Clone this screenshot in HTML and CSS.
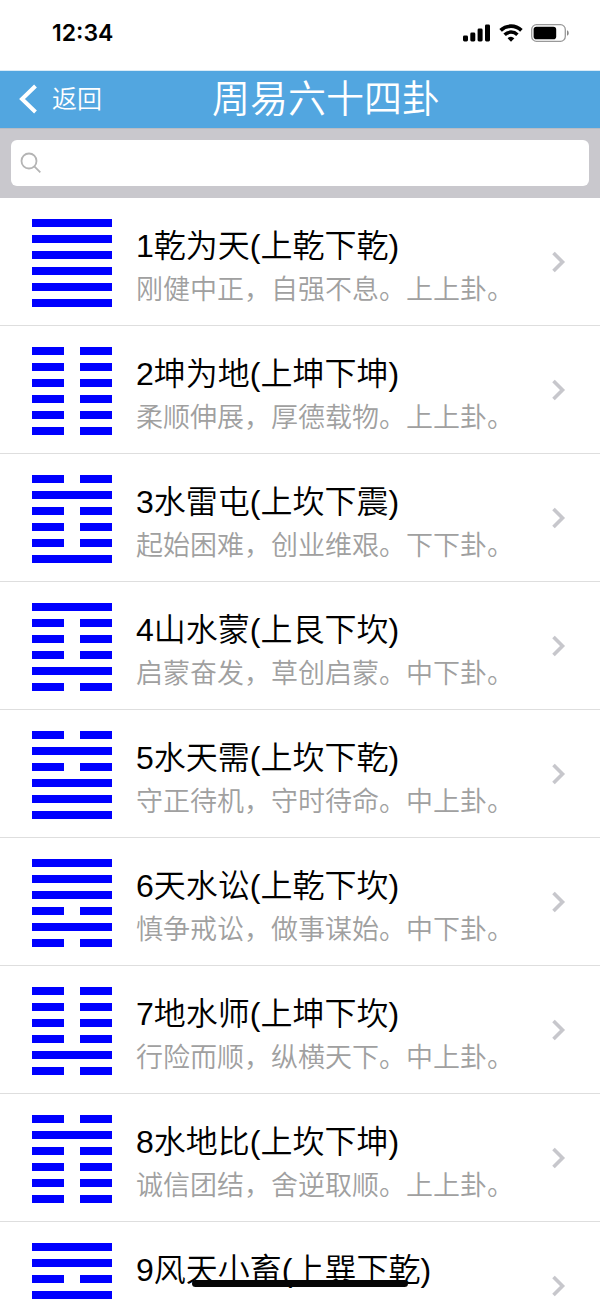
FILE: index.html
```html
<!DOCTYPE html>
<html lang="zh-CN">
<head>
<meta charset="utf-8">
<meta name="viewport" content="width=device-width, initial-scale=1">
<title>周易六十四卦</title>
<link rel="stylesheet" href="styles.css">
</head>
<body>
<svg class="defs" aria-hidden="true">
  <symbol id="chevron" viewBox="0 0 14 22"><path d="M1.500 2l9 9-9 9" fill="none" stroke="currentColor" stroke-width="3.600"/></symbol>
</svg>
<div class="status">
  <span class="time">12:34</span>
  <span class="indicators">
    <svg width="28" height="18" viewBox="0 0 28 18"><rect x="0" y="11.500" width="5" height="6" rx="1.400"/><rect x="7.300" y="8.500" width="5" height="9" rx="1.400"/><rect x="14.600" y="4.500" width="5" height="13" rx="1.400"/><rect x="22" y="0.500" width="5" height="17" rx="1.400"/></svg>
    <svg width="24" height="18" viewBox="0 0 24 18"><path d="M1.600 6.400a15 15 0 0 1 20.800 0" fill="none" stroke="#000" stroke-width="3.700"/><path d="M5.600 10.700a9.200 9.200 0 0 1 12.800 0" fill="none" stroke="#000" stroke-width="3.500"/><path d="M12 17.700l-3.400-3.400a5 5 0 0 1 6.800 0z"/></svg>
    <svg width="38" height="18" viewBox="0 0 38 18"><rect x="0.700" y="0.700" width="33.600" height="16.600" rx="4.800" fill="none" stroke="#999" stroke-width="1.300"/><rect x="2.600" y="2.800" width="22.600" height="12.400" rx="2.800"/><path d="M36 6.200c2.300.8 2.300 4.800 0 5.600z" fill="#888"/></svg>
  </span>
</div>
<header class="navbar">
  <a class="back" href="#"><svg width="20" height="30" viewBox="0 0 20 30"><path d="M17.500 2L4 15l13.500 13" fill="none" stroke="#fff" stroke-width="4"/></svg><span>返回</span></a>
  <h1>周易六十四卦</h1>
</header>
<form class="search" role="search">
  <label class="field">
    <svg width="22" height="22" viewBox="0 0 22 22"><circle cx="9" cy="9" r="7.500"/><path d="M14.300 14.300l6 6"/></svg>
    <input type="search" aria-label="搜索">
  </label>
</form>
<ul class="list">
  <li><a class="row" href="#"><svg class="gua" viewBox="0 0 80 88"><path d="M0 4h80M0 20h80M0 36h80M0 52h80M0 68h80M0 84h80"/></svg><span class="text"><span class="name">1乾为天(上乾下乾)</span><span class="desc">刚健中正，自强不息。上上卦。</span></span><svg class="go"><use href="#chevron"/></svg></a></li>
  <li><a class="row" href="#"><svg class="gua" viewBox="0 0 80 88"><path d="M0 4h32m16 0h32M0 20h32m16 0h32M0 36h32m16 0h32M0 52h32m16 0h32M0 68h32m16 0h32M0 84h32m16 0h32"/></svg><span class="text"><span class="name">2坤为地(上坤下坤)</span><span class="desc">柔顺伸展，厚德载物。上上卦。</span></span><svg class="go"><use href="#chevron"/></svg></a></li>
  <li><a class="row" href="#"><svg class="gua" viewBox="0 0 80 88"><path d="M0 4h32m16 0h32M0 20h80M0 36h32m16 0h32M0 52h32m16 0h32M0 68h32m16 0h32M0 84h80"/></svg><span class="text"><span class="name">3水雷屯(上坎下震)</span><span class="desc">起始困难，创业维艰。下下卦。</span></span><svg class="go"><use href="#chevron"/></svg></a></li>
  <li><a class="row" href="#"><svg class="gua" viewBox="0 0 80 88"><path d="M0 4h80M0 20h32m16 0h32M0 36h32m16 0h32M0 52h32m16 0h32M0 68h80M0 84h32m16 0h32"/></svg><span class="text"><span class="name">4山水蒙(上艮下坎)</span><span class="desc">启蒙奋发，草创启蒙。中下卦。</span></span><svg class="go"><use href="#chevron"/></svg></a></li>
  <li><a class="row" href="#"><svg class="gua" viewBox="0 0 80 88"><path d="M0 4h32m16 0h32M0 20h80M0 36h32m16 0h32M0 52h80M0 68h80M0 84h80"/></svg><span class="text"><span class="name">5水天需(上坎下乾)</span><span class="desc">守正待机，守时待命。中上卦。</span></span><svg class="go"><use href="#chevron"/></svg></a></li>
  <li><a class="row" href="#"><svg class="gua" viewBox="0 0 80 88"><path d="M0 4h80M0 20h80M0 36h80M0 52h32m16 0h32M0 68h80M0 84h32m16 0h32"/></svg><span class="text"><span class="name">6天水讼(上乾下坎)</span><span class="desc">慎争戒讼，做事谋始。中下卦。</span></span><svg class="go"><use href="#chevron"/></svg></a></li>
  <li><a class="row" href="#"><svg class="gua" viewBox="0 0 80 88"><path d="M0 4h32m16 0h32M0 20h32m16 0h32M0 36h32m16 0h32M0 52h32m16 0h32M0 68h80M0 84h32m16 0h32"/></svg><span class="text"><span class="name">7地水师(上坤下坎)</span><span class="desc">行险而顺，纵横天下。中上卦。</span></span><svg class="go"><use href="#chevron"/></svg></a></li>
  <li><a class="row" href="#"><svg class="gua" viewBox="0 0 80 88"><path d="M0 4h32m16 0h32M0 20h80M0 36h32m16 0h32M0 52h32m16 0h32M0 68h32m16 0h32M0 84h32m16 0h32"/></svg><span class="text"><span class="name">8水地比(上坎下坤)</span><span class="desc">诚信团结，舍逆取顺。上上卦。</span></span><svg class="go"><use href="#chevron"/></svg></a></li>
  <li><a class="row" href="#"><svg class="gua" viewBox="0 0 80 88"><path d="M0 4h80M0 20h80M0 36h32m16 0h32M0 52h80M0 68h80M0 84h80"/></svg><span class="text"><span class="name">9风天小畜(上巽下乾)</span></span><svg class="go"><use href="#chevron"/></svg></a></li>
</ul>
<div class="home-indicator"></div>
</body>
</html>
```
FILE: styles.css
```css
* { box-sizing: border-box; }
body {
  margin: 0;
  height: 100vh;
  overflow: hidden;
  display: flex;
  flex-direction: column;
  background: #fff;
  color: #000;
  font-family: "Liberation Sans", "Noto Sans CJK SC", sans-serif;
}
svg { display: block; flex: none; }
a { color: inherit; text-decoration: none; }
.defs { position: absolute; width: 0; height: 0; }

.status {
  flex: none;
  display: flex;
  justify-content: space-between;
  align-items: center;
  padding: 18px 31px 22px 52px;
}
.time { font-family: Inter, sans-serif; font-size: 23px; line-height: 30px; font-weight: 600; }
.indicators { display: flex; align-items: center; gap: 8px; }

.navbar {
  flex: none;
  display: grid;
  grid-template-columns: 1fr auto 1fr;
  align-items: center;
  height: 58px;
  padding: 0 18px 2px;
  border-top: 1px solid #d9ebf7;
  background: #52a6e0;
  color: #fff;
  font-weight: 350;
}
.back { display: flex; align-items: center; gap: 14px; font-size: 25px; line-height: 36px; }
.navbar h1 { margin: 0; padding-left: 52px; font-size: 38px; line-height: 52px; font-weight: 350; }

.search {
  flex: none;
  padding: 11px 11px 12px;
  border-top: 1px solid #b8bcc4;
  background: #c9c8cd;
}
.field {
  display: flex;
  align-items: center;
  gap: 8px;
  height: 46px;
  padding: 0 9px;
  border-radius: 6px;
  background: #fff;
}
.field svg { fill: none; stroke: #b4b4b4; stroke-width: 1.8; }
.field input {
  flex: 1;
  min-width: 0;
  border: 0;
  outline: 0;
  background: none;
  font: inherit;
  font-size: 26px;
}

.list { flex: none; margin: 0; padding: 0; list-style: none; }
.row {
  display: flex;
  align-items: flex-start;
  height: 128px;
  padding: 21px 34px 0 32px;
  border-bottom: 1px solid #dedede;
}
.gua { width: 80px; height: 88px; fill: none; stroke: #00f; stroke-width: 8; }
.text { flex: 1; min-width: 0; padding: 5px 0 0 24px; white-space: nowrap; }
.name, .desc { display: block; line-height: 44px; font-weight: 350; }
.name { font-size: 32px; }
.desc { font-size: 27px; color: #a0a0a0; }
.go { width: 14px; height: 22px; margin-top: 32px; color: #c7c7cc; }

.home-indicator {
  position: fixed;
  bottom: 12px;
  left: 50%;
  width: 36%;
  height: 7px;
  border-radius: 4px;
  background: #050505;
  transform: translateX(-50%);
}
```
